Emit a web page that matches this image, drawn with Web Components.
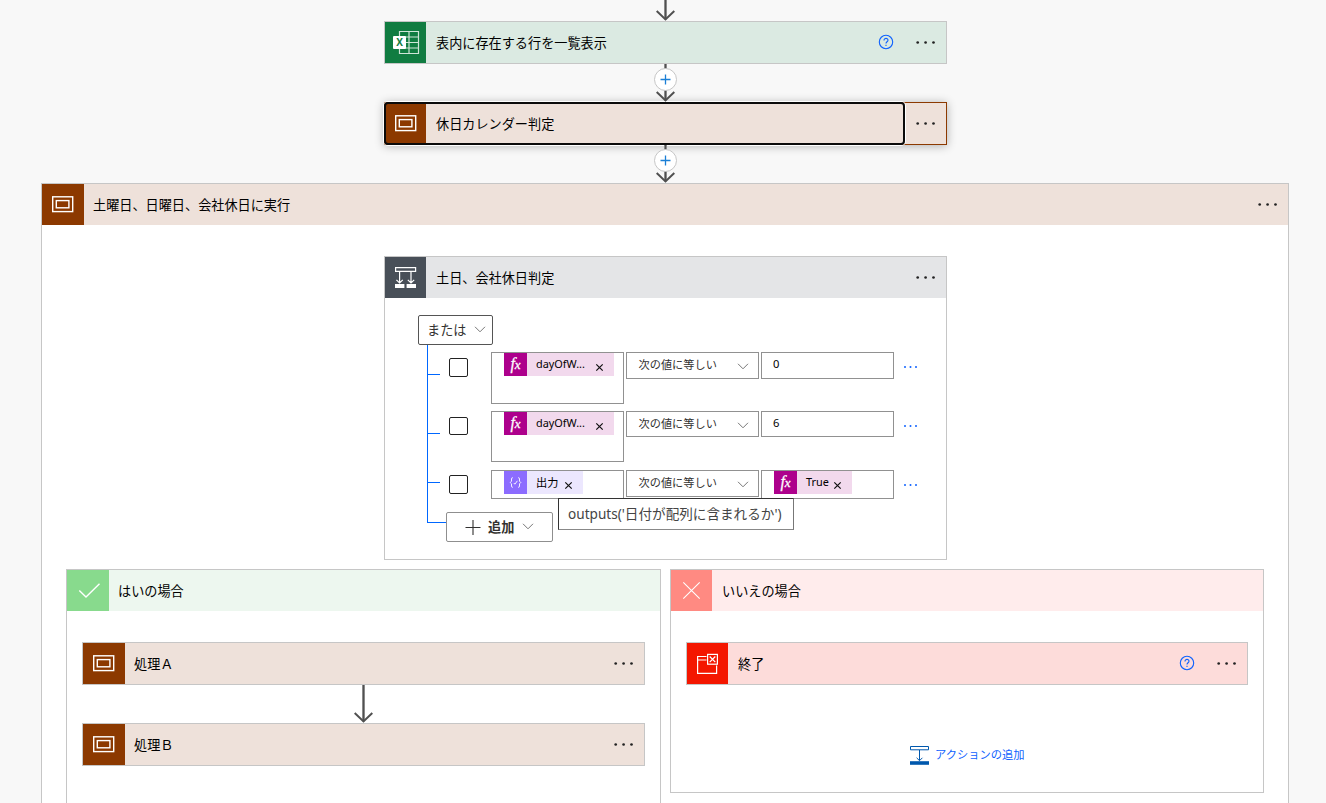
<!DOCTYPE html>
<html lang="ja">
<head>
<meta charset="utf-8">
<title>フロー</title>
<style>
    html, body {
        margin: 0;
        height: 803px;
        overflow: hidden;
        background: #f8f8f8;
        color: #000;
        font-family: "Noto Sans", "Noto Sans CJK JP", sans-serif;
        font-size: 13.15px;
    }

    .flow {
        display: flex;
        flex-direction: column;
        align-items: center;
        width: 1249px;
        margin-left: 41px;
    }

    .flow > .scope {
        align-self: flex-start;
        width: 1248px;
        height: 620px;
        border-bottom: 0;
    }

    .branches {
        display: flex;
        align-items: flex-start;
        gap: 9px;
        margin: 9px 0 0 24px;
    }

    .steps {
        display: flex;
        flex-direction: column;
        align-items: center;
        padding: 31px 15px 0;
    }

    .tree {
        margin-left: 9px;
        border-left: 1px solid #0067ff;
    }

    .tree-end {
        width: 18px;
        height: 23px;
        border-bottom: 1px solid #0067ff;
    }
</style>
</head>
<body>
<div class="flow">
    <flow-arrow height="21"></flow-arrow>
    <flow-card icon="excel" color="#107c41" tint="#dbeae2" help menu style="width:563px">表内に存在する行を一覧表示</flow-card>
    <flow-arrow height="38" plus></flow-arrow>
    <flow-card icon="scope" color="#8c3900" tint="#eee1da" menu selected style="width:563px">休日カレンダー判定</flow-card>
    <flow-arrow height="38" plus></flow-arrow>
    <flow-card class="scope" icon="scope" color="#8c3900" tint="#eee1da" menu open wide>
        土曜日、日曜日、会社休日に実行
        <div slot="body">
            <flow-card icon="condition" color="#484f58" tint="#e4e5e7" menu open style="width:563px;height:304px;margin:31px 0 0 342px">
                土日、会社休日判定
                <div slot="body" style="padding:17px 0 0 33px">
                    <flow-button style="width:75px" dark>または</flow-button>
                    <div class="tree">
                        <condition-row style="--gap:7px;--h:52px;--op:27px;--val:27px;--tick:22px;--chk:6px">
                            <value-token slot="left" kind="fx" width="110">dayOfW...</value-token>
                            0
                        </condition-row>
                        <condition-row style="--gap:7px;--h:51px;--op:26px;--val:26px;--tick:22px;--chk:6px;--chk-h:18px">
                            <value-token slot="left" kind="fx" width="110">dayOfW...</value-token>
                            6
                        </condition-row>
                        <condition-row style="--gap:8px;--h:29px;--op:27px;--val:29px;--tick:12px;--chk:5px">
                            <value-token slot="left" kind="data" width="79">出力</value-token>
                            <value-token kind="fx" width="78">True</value-token>
                            <hover-tip slot="tip">outputs('日付が配列に含まれるか')</hover-tip>
                        </condition-row>
                        <div class="tree-end"></div>
                    </div>
                    <flow-button add style="width:107px;margin:-11px 0 0 28px">追加</flow-button>
                </div>
            </flow-card>
            <div class="branches">
                <flow-card icon="yes" color="#88da8d" tint="#edf7ef" open wide style="width:595px;height:234px;border-bottom:0">
                    はいの場合
                    <div slot="body" class="steps">
                        <flow-card icon="scope" color="#8c3900" tint="#eee1da" menu wide style="width:563px">処理Ａ</flow-card>
                        <flow-arrow height="38"></flow-arrow>
                        <flow-card icon="scope" color="#8c3900" tint="#eee1da" menu wide style="width:563px">処理Ｂ</flow-card>
                    </div>
                </flow-card>
                <flow-card icon="no" color="#ff8a82" tint="#ffecec" open style="width:594px;height:224px">
                    いいえの場合
                    <div slot="body" class="steps">
                        <flow-card icon="terminate" color="#f41700" tint="#fddcda" help menu style="width:562px">終了</flow-card>
                        <add-action style="margin-top:60px">アクションの追加</add-action>
                    </div>
                </flow-card>
            </div>
        </div>
    </flow-card>
</div>

<script>
const ICONS = {
    excel: `
        <g fill="none" stroke="#cfe5d8" stroke-width="1.2">
            <path d="M14.5 9.5H33.5V31.5H14.5ZM24 9.5V31.5M14.5 15H33.5M14.5 20.5H33.5M14.5 26H33.5"/>
        </g>
        <rect x="8" y="14" width="13" height="13" rx="1" fill="#fff"/>
        <text x="14.5" y="24.2" text-anchor="middle" font-family="Open Sans" font-weight="700" font-size="10" fill="#107c41">X</text>`,
    scope: `
        <g fill="none" stroke="#fff" stroke-width="1.4">
            <rect x="10.7" y="12.8" width="20" height="14.8"/>
            <rect x="14.3" y="16.6" width="12.6" height="7.2"/>
        </g>`,
    condition: `
        <g fill="none" stroke="#fff" stroke-width="1.2">
            <path d="M10.6 10.6H30.6V14.4H10.6ZM14.6 14.4V26M26 14.4V26M11.4 22.8L14.6 26L17.8 22.8M22.8 22.8L26 26L29.2 22.8"/>
        </g>
        <path d="M10 27H19.4V31H10ZM21.6 27H31V31H21.6Z" fill="#fff"/>`,
    yes: `<path d="M12.3 20.5L19 27L32.5 13.8" fill="none" stroke="#fff" stroke-width="1.4"/>`,
    no: `<path d="M12.3 12.3L28.7 28.7M28.7 12.3L12.3 28.7" fill="none" stroke="#fff" stroke-width="1.1"/>`,
    terminate: `
        <g fill="none" stroke="#fff" stroke-width="1.2">
            <path d="M19.5 13.5H10.6V30.4H29.6V22.5M10.6 17H19.5"/>
            <rect x="20.6" y="11.4" width="9.8" height="9.8"/>
            <path d="M22.7 13.5L28.3 19.1M28.3 13.5L22.7 19.1"/>
        </g>`
};

const CHEVRON = `<svg width="12" height="7" viewBox="0 0 12 7"><path d="M1 .8L6 5.8L11 .8" fill="none" stroke="#777" stroke-width="1"/></svg>`;

// 操作カード。open のときは本体スロットを持つ枠になる
class FlowCard extends HTMLElement {
    constructor() {
        super();
        this.attachShadow({ mode: 'open' });
    }

    connectedCallback() {
        const open = this.hasAttribute('open');
        const selected = this.hasAttribute('selected');
        const iconWidth = this.hasAttribute('wide') ? 42 : 41;

        this.shadowRoot.innerHTML = `
            <style>
                :host {
                    display: block;
                    box-sizing: border-box;
                    flex: none;
                    border: 1px solid #c6c6c6;
                    background: #fff;
                }
                :host([selected]) {
                    position: relative;
                    border-color: #8c3900;
                    box-shadow: 0 1px 9px rgba(0, 0, 0, .3);
                }
                header {
                    display: flex;
                    align-items: center;
                    height: 41px;
                    background: ${this.getAttribute('tint')};
                }
                .icon {
                    flex: none;
                    width: ${iconWidth}px;
                    height: 41px;
                    background: ${this.getAttribute('color')};
                }
                .title {
                    flex: 1;
                    margin-left: ${iconWidth === 42 ? 9 : 10}px;
                    line-height: 20px;
                    white-space: nowrap;
                }
                svg { display: block; }
                .focus {
                    position: absolute;
                    left: -1px;
                    top: -1px;
                    width: 517px;
                    height: 39px;
                    border: 2px solid #0b0b0b;
                    border-radius: 4px;
                    box-shadow: 0 0 0 1px #fff;
                }
            </style>
            <header>
                <div class="icon"><svg width="${iconWidth}" height="41" viewBox="0 0 ${iconWidth} 41">${ICONS[this.getAttribute('icon')]}</svg></div>
                <div class="title"><slot></slot></div>
                ${this.hasAttribute('help') ? `
                <svg width="16" height="16" viewBox="0 0 16 16" style="margin:0 10.5px 2px 0" fill="none" stroke="#0f62fe" stroke-width="1.1">
                    <circle cx="8" cy="8" r="6.7"/>
                    <path d="M6 6.4C6 3.6 10.1 3.8 10 6.3C9.9 7.8 8 7.8 8 9.6M8 10.8V12"/>
                </svg>` : ''}
                ${this.hasAttribute('menu') ? `
                <svg width="42" height="41" viewBox="0 0 42 41" fill="#222">
                    <circle cx="13.7" cy="20.5" r="1.35"/>
                    <circle cx="21.6" cy="20.5" r="1.35"/>
                    <circle cx="29.5" cy="20.5" r="1.35"/>
                </svg>` : ''}
            </header>
            ${selected ? '<div class="focus"></div>' : ''}
            ${open ? '<slot name="body"></slot>' : ''}
        `;
    }
}

// カード間の矢印。plus で挿入ボタンを重ねる
class FlowArrow extends HTMLElement {
    constructor() {
        super();
        this.attachShadow({ mode: 'open' });
    }

    connectedCallback() {
        const h = Number(this.getAttribute('height'));
        this.shadowRoot.innerHTML = `
            <style>
                :host { display: block; height: ${h}px; position: relative; z-index: 1; }
                svg { display: block; }
            </style>
            <svg width="25" height="${h}" viewBox="0 0 25 ${h}" fill="none">
                <path d="M12.5 0V${h - 2}" stroke="#999" stroke-width="3"/>
                <path d="M12.5 0V${h - 1}" stroke="#505050" stroke-width="1.4"/>
                <path d="M3.7 ${h - 10}L12.5 ${h - 1.6}L21.3 ${h - 10}" stroke="#505050" stroke-width="2"/>
                ${this.hasAttribute('plus') ? `
                <circle cx="12.5" cy="15.5" r="11" fill="#fff" stroke="#c6c6c6"/>
                <path d="M7.5 15.5H17.5M12.5 10.5V20.5" stroke="#1a7fd6" stroke-width="1.3"/>` : ''}
            </svg>
        `;
    }
}

class FlowButton extends HTMLElement {
    constructor() {
        super();
        this.attachShadow({ mode: 'open' });
    }

    connectedCallback() {
        const add = this.hasAttribute('add');
        this.shadowRoot.innerHTML = `
            <style>
                :host {
                    display: flex;
                    align-items: center;
                    box-sizing: border-box;
                    height: 30px;
                    padding: 0 ${add ? 18 : 6}px 1px ${add ? 18 : 8}px;
                    border: 1px solid #8f8f8f;
                    border-radius: 2px;
                    background: #fff;
                    color: #323130;
                    line-height: 20px;
                    white-space: nowrap;
                }
                :host([dark]) { border-color: #555; }
                :host([add]) { font-weight: 700; }
                .label { flex: 1; padding-top: 1px; }
            </style>
            ${add ? '<svg width="16" height="16" viewBox="0 0 16 16" style="margin-right:7px"><path d="M.5 8.5H15.5M8 1V16" stroke="#323130" stroke-width="1.1"/></svg>' : ''}
            <span class="label"><slot></slot></span>
            ${CHEVRON}
        `;
    }
}

class ConditionRow extends HTMLElement {
    constructor() {
        super();
        this.attachShadow({ mode: 'open' });
        this.shadowRoot.innerHTML = `
            <style>
                :host {
                    display: flex;
                    align-items: flex-start;
                    position: relative;
                    height: var(--h);
                    padding-top: var(--gap);
                    font-size: 11.2px;
                    line-height: 16px;
                }
                .tick {
                    width: 12px;
                    height: 1px;
                    margin-top: var(--tick);
                    background: #0067ff;
                }
                .check {
                    box-sizing: border-box;
                    width: 19px;
                    height: var(--chk-h, 19px);
                    margin: var(--chk) 23px 0 9px;
                    border: 1px solid #222;
                    border-radius: 2px;
                }
                .field {
                    display: flex;
                    align-items: flex-start;
                    box-sizing: border-box;
                    width: 133px;
                    height: var(--h);
                    margin-right: 2px;
                    padding-left: 12px;
                    border: 1px solid #919191;
                    color: #000;
                }
                .op {
                    height: var(--op);
                    padding: 4px 9px 0 11.5px;
                    color: #323130;
                }
                .op span { flex: 1; }
                .op svg { margin-top: 6px; }
                .val { height: var(--val); padding-left: 12px; }
                .plain { margin: 3px 0 0 -1px; }
                .more { margin: 12px 0 0 6px; }
            </style>
            <div class="tick"></div>
            <div class="check"></div>
            <div class="field"><slot name="left"></slot></div>
            <div class="field op"><span>次の値に等しい</span>${CHEVRON}</div>
            <div class="field val"><div class="text"><slot></slot></div></div>
            <svg class="more" width="18" height="6" viewBox="0 0 18 6" fill="#0f62fe">
                <circle cx="3" cy="3.1" r="1"/>
                <circle cx="8.5" cy="3.1" r="1"/>
                <circle cx="14" cy="3.1" r="1"/>
            </svg>
            <slot name="tip"></slot>
        `;
    }

    connectedCallback() {
        // トークンでない値は入力欄の文字位置に合わせる
        if (!this.querySelector('value-token:not([slot])')) {
            this.shadowRoot.querySelector('.text').classList.add('plain');
        }
    }
}

class ValueToken extends HTMLElement {
    constructor() {
        super();
        this.attachShadow({ mode: 'open' });
    }

    connectedCallback() {
        const fx = this.getAttribute('kind') === 'fx';
        this.shadowRoot.innerHTML = `
            <style>
                :host {
                    display: flex;
                    align-items: center;
                    width: ${this.getAttribute('width')}px;
                    height: 23px;
                    background: ${fx ? '#f2d9ed' : '#ece7fe'};
                    white-space: nowrap;
                }
                .badge {
                    width: 23px;
                    height: 23px;
                    background: ${fx ? '#ad008c' : '#8c6cff'};
                    color: #fff;
                    text-align: center;
                    font: italic 16px/21px "Liberation Serif", serif;
                    -webkit-text-stroke: .3px #fff;
                }
                small { font-size: 13px; }
                .name { flex: 1; margin: 0 0 ${fx ? 2 : 0}px 9px; font-size: ${fx ? 10.9 : 11.2}px; }
                .close { margin: 5px 10px 0 0; }
                svg { display: block; }
            </style>
            <div class="badge">${fx ? 'f<small>x</small>' : `
                <svg width="23" height="23" viewBox="0 0 23 23" fill="none" stroke="#fff" stroke-width=".9">
                    <path d="M9 6.8H8.3Q7.5 6.8 7.5 7.8V10.2L6.2 11.5L7.5 12.8V15.2Q7.5 16.2 8.3 16.2H9M14 6.8H14.7Q15.5 6.8 15.5 7.8V10.2L16.8 11.5L15.5 12.8V15.2Q15.5 16.2 14.7 16.2H14M9.8 12L10.9 13.2L13.4 9.8"/>
                </svg>`}</div>
            <span class="name"><slot></slot></span>
            <svg class="close" width="9" height="9" viewBox="0 0 9 9"><path d="M1.3 1.3L7.7 7.7M7.7 1.3L1.3 7.7" stroke="#111" stroke-width="1.2"/></svg>
        `;
    }
}

class HoverTip extends HTMLElement {
    constructor() {
        super();
        this.attachShadow({ mode: 'open' });
        this.shadowRoot.innerHTML = `
            <style>
                :host {
                    position: absolute;
                    left: 130px;
                    top: 36px;
                    z-index: 2;
                    box-sizing: border-box;
                    width: 236px;
                    height: 32px;
                    padding-left: 9px;
                    border: 1px solid;
                    border-color: #333 #777 #888 #333;
                    background: #fff;
                    color: #444;
                    font-size: 13.6px;
                    line-height: 30px;
                    white-space: nowrap;
                }
            </style>
            <slot></slot>
        `;
    }
}

class AddAction extends HTMLElement {
    constructor() {
        super();
        this.attachShadow({ mode: 'open' });
        this.shadowRoot.innerHTML = `
            <style>
                :host {
                    display: flex;
                    align-items: center;
                    gap: 6.5px;
                    color: #0f62fe;
                    font-size: 11.25px;
                    line-height: 20px;
                }
            </style>
            <svg width="19" height="20" viewBox="0 0 19 20" fill="none" stroke="#0058ad">
                <path d="M.5 1.5H18.5V4.8H.5ZM9.5 5V15.5M6.6 12.8L9.5 15.7L12.4 12.8"/>
                <path d="M0 18H19" stroke-width="3.6"/>
            </svg>
            <slot></slot>
        `;
    }
}

customElements.define('flow-card', FlowCard);
customElements.define('flow-arrow', FlowArrow);
customElements.define('flow-button', FlowButton);
customElements.define('condition-row', ConditionRow);
customElements.define('value-token', ValueToken);
customElements.define('hover-tip', HoverTip);
customElements.define('add-action', AddAction);
</script>
</body>
</html>
